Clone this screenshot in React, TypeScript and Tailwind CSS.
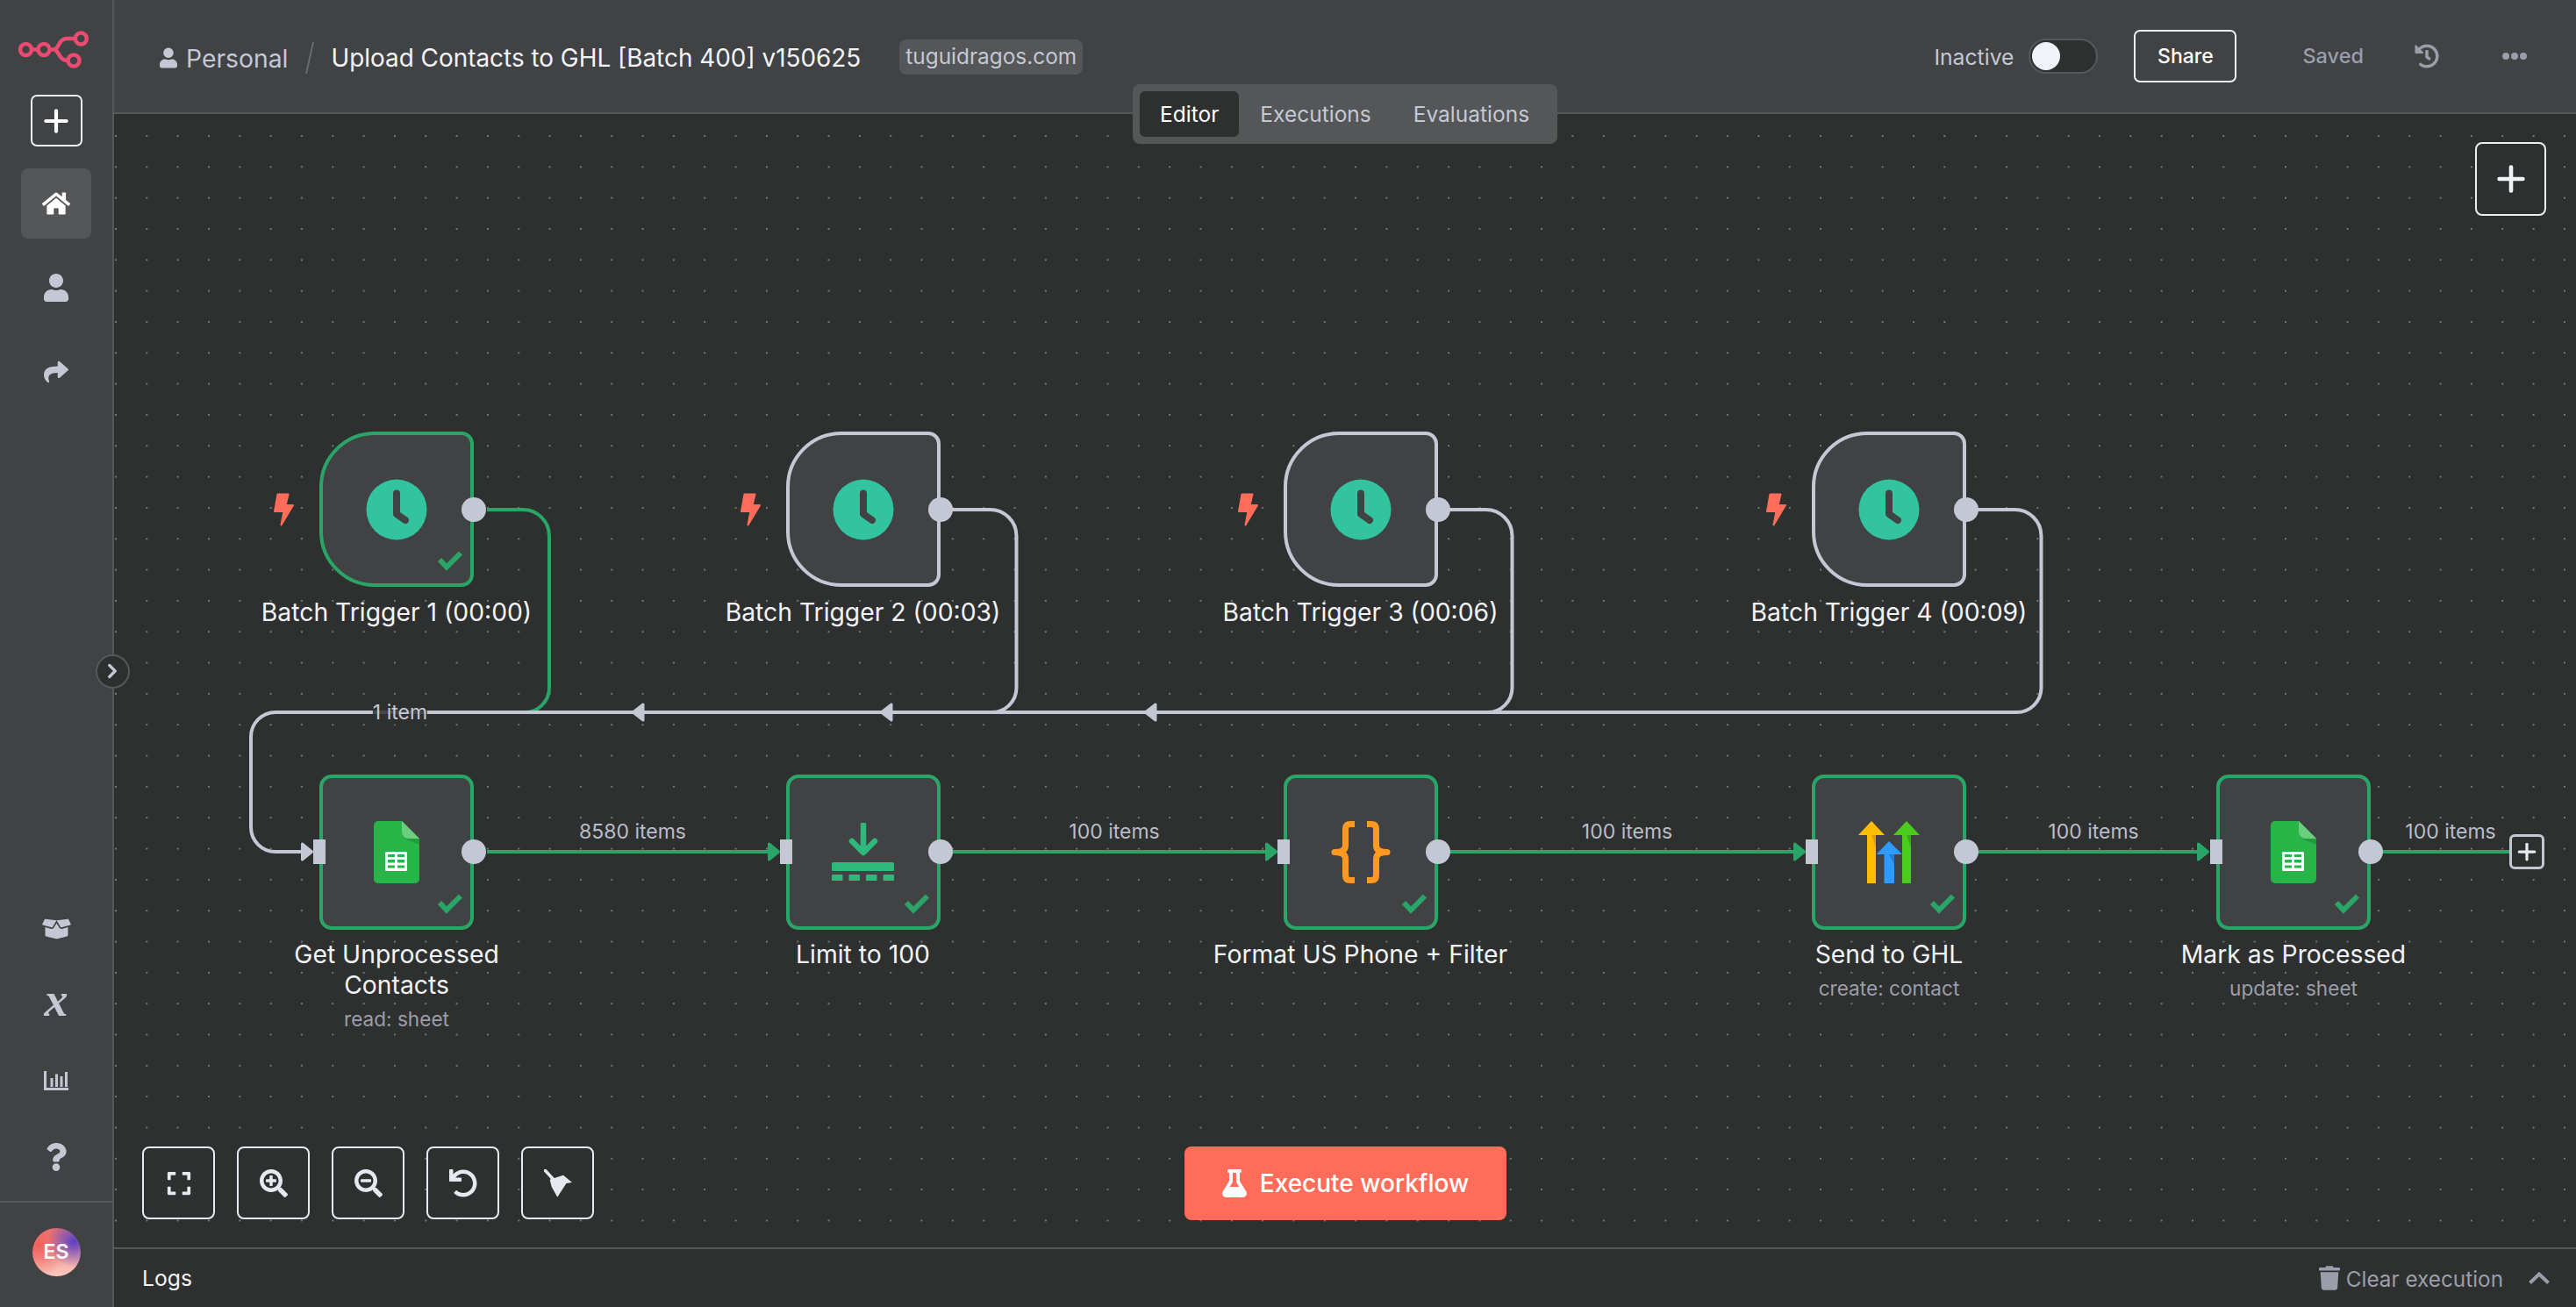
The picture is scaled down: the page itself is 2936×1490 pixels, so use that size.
import { Plus, ChevronRight } from 'lucide-react';
import {
  FaBoxOpen,
  FaExpand,
  FaFlask,
  FaHistory,
  FaHome,
  FaQuestion,
  FaSearchMinus,
  FaSearchPlus,
  FaShare,
  FaTrash,
  FaUndo,
  FaUser
} from 'react-icons/fa';

const GREEN = '#2aa568';
const GRAY = '#c4c8d4';

function Logo() {
  return (
    <svg viewBox="0 0 130 108" className="w-[130px] h-[108px]" fill="none" stroke="#ea4b71" strokeWidth="4.5">
      <circle cx="30.5" cy="56.5" r="6.5" />
      <circle cx="51" cy="56.5" r="6.5" />
      <circle cx="93.3" cy="44" r="6.5" />
      <circle cx="85" cy="69" r="6.5" />
      <path d="M37 56.5 H44.5 M57.5 56.5 H62 C69 56.5 67 44 77 44 H86.5 M62 56.5 C69 56.5 67 69 78.5 69" />
    </svg>
  );
}

function ChartIcon() {
  return (
    <svg viewBox="0 0 28 22" className="w-[28px] h-[22px]" fill={GRAY}>
      <path d="M1.5 0 V20.5 H28" fill="none" stroke={GRAY} strokeWidth="3" />
      <rect x="7.5" y="8" width="3" height="10" />
      <rect x="13" y="3.5" width="3" height="14.5" />
      <rect x="18.5" y="6" width="3" height="12" />
      <rect x="24" y="1" width="3" height="17" />
    </svg>
  );
}

function BroomIcon() {
  return (
    <svg viewBox="0 0 32 32" className="w-[32px] h-[32px]" fill="#e6e9f0">
      <path d="M1 1 L13 14" fill="none" stroke="#e6e9f0" strokeWidth="3.5" strokeLinecap="round" />
      <path d="M6.6 11.7 L22 6.7 L32 15 L25.5 16 L15.3 31.7 L8.7 20 Z" />
    </svg>
  );
}

function Sidebar() {
  return (
    <div className="w-[130px] shrink-0 bg-[#414244] border-r-2 border-[#56575a] flex flex-col items-center">
      <Logo />
      <button className="w-[59px] h-[59px] shrink-0 rounded-[7px] border-2 border-[#eceef4] flex items-center justify-center text-white">
        <Plus className="w-[40px] h-[40px] shrink-0" strokeWidth={2.5} />
      </button>
      <div className="mt-[25px] flex flex-col gap-[16px]">
        <div className="w-[80px] h-[80px] rounded-[8px] bg-[#555658] flex items-center justify-center text-white">
          <FaHome className="w-[32px] h-[32px]" />
        </div>
        <div className="w-[80px] h-[80px] flex items-center justify-center text-[#c4c8d4]">
          <FaUser className="w-[28px] h-[32px]" />
        </div>
        <div className="w-[80px] h-[80px] flex items-center justify-center text-[#c4c8d4]">
          <FaShare className="w-[32px] h-[28px]" />
        </div>
      </div>

      <div className="mt-auto w-full flex flex-col">
        <div className="h-[86.6px] flex items-center justify-center text-[#c4c8d4]">
          <FaBoxOpen className="w-[33px] h-[26px]" />
        </div>
        <div className="h-[86.6px] flex items-center justify-center">
          <span className="-mt-[11px] text-[54px] leading-none font-bold italic text-[#c4c8d4] [font-family:'Liberation_Serif',serif]">x</span>
        </div>
        <div className="h-[86.6px] flex items-center justify-center">
          <ChartIcon />
        </div>
        <div className="h-[86.6px] flex items-center justify-center text-[#c4c8d4]">
          <FaQuestion className="w-[24px] h-[32px]" />
        </div>
        <div className="mt-[7px] h-[121px] border-t-2 border-[#56575a] flex justify-center pt-[29px]">
          <div className="w-[55px] h-[55px] rounded-full flex items-center justify-center text-white text-[23px] font-semibold bg-[radial-gradient(circle_at_85%_28%,#5a3fc4_0%,transparent_48%),radial-gradient(circle_at_12%_35%,#f0605c_0%,transparent_60%),linear-gradient(180deg,#e87a7a,#fcc8bc)]">
            ES
          </div>
        </div>
      </div>
    </div>
  );
}

function Header() {
  return (
    <div className="h-[130px] shrink-0 bg-[#414244] border-b-2 border-[#56575a] flex items-center pl-[52px] pr-[56px]">
      <FaUser className="w-[20px] h-[24px] text-[#c4c8d4] mt-[4px]" />
      <span className="ml-[10px] mt-[6px] text-[28.3px] text-[#c4c8d4]">Personal</span>
      <svg viewBox="0 0 10 36" className="ml-[20px] w-[10px] h-[36px] mt-[4px]">
        <path d="M9 0 L1 36" stroke="#6a6b6e" strokeWidth="2" />
      </svg>
      <span className="ml-[19px] mt-[6px] text-[27.9px] text-[#f2f3f7]">Upload Contacts to GHL [Batch 400] v150625</span>
      <span className="ml-[44px] mt-[1px] h-[40px] px-[7px] rounded-[8px] bg-[#555658] text-[24.4px] text-[#c4c8d4] flex items-center">
        tuguidragos.com
      </span>

      <div className="ml-auto flex items-center">
        <span className="mt-[3px] text-[24.7px] text-[#c4c8d4]">Inactive</span>
        <div className="ml-[17px] w-[79px] h-[40px] rounded-full bg-[#2e302f] border-2 border-[#56575a] flex items-center pl-[2px]">
          <div className="w-[32px] h-[32px] rounded-full bg-[#f2f3f8]" />
        </div>
        <button className="ml-[41px] w-[117px] h-[60px] rounded-[7px] border-2 border-[#eceef4] text-[23px] font-medium text-white">
          Share
        </button>
        <span className="ml-[75px] text-[23.5px] font-medium text-[#9a9eab]">Saved</span>
        <FaHistory className="ml-[58px] w-[28px] h-[28px] text-[#9a9eab]" />
        <div className="ml-[72px] flex gap-[2px]">
          <div className="w-[8px] h-[8px] rounded-full bg-[#9a9eab]" />
          <div className="w-[8px] h-[8px] rounded-full bg-[#9a9eab]" />
          <div className="w-[8px] h-[8px] rounded-full bg-[#9a9eab]" />
        </div>
      </div>
    </div>
  );
}

function Tabs() {
  return (
    <div className="absolute left-[1161px] -top-[34px] w-[484px] h-[68px] rounded-[8px] bg-[#555658] flex items-center px-[8px] text-[24.5px] text-[#c4c8d4]">
      <div className="h-[52px] px-[23px] rounded-[6px] bg-[#2e302f] text-white flex items-center">Editor</div>
      <div className="px-[24px]">Executions</div>
      <div className="px-[24px]">Evaluations</div>
    </div>
  );
}

function ClockIcon() {
  return (
    <svg viewBox="0 0 70 70" className="w-[70px] h-[70px]">
      <circle cx="35" cy="35" r="34.5" fill="#31c49f" />
      <path d="M35 16.5 V40 L45 47" fill="none" stroke="#414244" strokeWidth="8" strokeLinejoin="round" strokeLinecap="round" />
    </svg>
  );
}

function SheetsIcon() {
  return (
    <svg viewBox="0 0 52 71" className="w-[52px] h-[71px]">
      <path d="M5 0 H32 L52 20 V66 a5 5 0 0 1 -5 5 H5 a5 5 0 0 1 -5 -5 V5 a5 5 0 0 1 5 -5 Z" fill="#28b446" />
      <path d="M35 20 L52 27 V20 Z" fill="#219b3c" />
      <path d="M32 0 L52 20 H40 a8 8 0 0 1 -8 -8 Z" fill="#6ace7c" />
      <rect x="13" y="35" width="25" height="22" rx="1.5" fill="#ffffff" />
      <g fill="#28b446">
        <rect x="16" y="38" width="8" height="3" />
        <rect x="27" y="38" width="8" height="3" />
        <rect x="16" y="44" width="8" height="3.5" />
        <rect x="27" y="44" width="8" height="3.5" />
        <rect x="16" y="50.5" width="8" height="3" />
        <rect x="27" y="50.5" width="8" height="3" />
      </g>
    </svg>
  );
}

function LimitIcon() {
  return (
    <svg viewBox="0 0 72 66" className="w-[72px] h-[66px]" fill="#2fb77c">
      <path d="M36 2 V33 M23 21 L36 34 L49 21" fill="none" stroke="#2fb77c" strokeWidth="6.5" strokeLinecap="round" strokeLinejoin="round" />
      <rect x="0" y="45" width="71" height="10" rx="1.5" />
      <rect x="0" y="59" width="12.5" height="7" rx="1" />
      <rect x="19.5" y="59" width="12.5" height="7" rx="1" />
      <rect x="39" y="59" width="12.5" height="7" rx="1" />
      <rect x="58.5" y="59" width="12.5" height="7" rx="1" />
    </svg>
  );
}

function CodeIcon() {
  return (
    <svg viewBox="0 0 68 71" className="w-[68px] h-[71px]" fill="none" stroke="#ff9922" strokeWidth="7" strokeLinejoin="round">
      <path d="M27 3.5 H22 Q16.5 3.5 16.5 9 V28 Q16.5 35.5 4 35.5 Q16.5 35.5 16.5 43 V62 Q16.5 67.5 22 67.5 H27" />
      <path d="M41 3.5 H46 Q51.5 3.5 51.5 9 V28 Q51.5 35.5 64 35.5 Q51.5 35.5 51.5 43 V62 Q51.5 67.5 46 67.5 H41" />
    </svg>
  );
}

function GhlIcon() {
  return (
    <svg viewBox="0 0 70 71" className="w-[70px] h-[71px]">
      <path d="M10 16 H20 V71 H10 Z" fill="#ffbc00" />
      <path d="M0 16 L15 0 L30 16 Z" fill="#ffbc00" />
      <path d="M15 16 H20 V30 Z" fill="#d99f06" />
      <path d="M50 16 H60 V71 H50 Z" fill="#4bcb1e" />
      <path d="M40 16 L55 0 L70 16 Z" fill="#4bcb1e" />
      <path d="M55 16 H60 V30 Z" fill="#3ca818" />
      <path d="M29.5 38 H41 V71 H29.5 Z" fill="#2d9bff" />
      <path d="M20.5 38 L35 23 L50 38 Z" fill="#2d9bff" />
      <path d="M35 38 H41 V50 Z" fill="#237fd4" />
    </svg>
  );
}

interface FlowNode {
  id: string;
  name: string;
  sub?: string;
  pos: string;
  icon: React.ReactNode;
}

const triggers: (FlowNode & { active: boolean })[] = [
  { id: 't1', name: 'Batch Trigger 1 (00:00)', pos: 'left-[364px] top-[492px]', icon: <ClockIcon />, active: true },
  { id: 't2', name: 'Batch Trigger 2 (00:03)', pos: 'left-[895.5px] top-[492px]', icon: <ClockIcon />, active: false },
  { id: 't3', name: 'Batch Trigger 3 (00:06)', pos: 'left-[1462.5px] top-[492px]', icon: <ClockIcon />, active: false },
  { id: 't4', name: 'Batch Trigger 4 (00:09)', pos: 'left-[2065px] top-[492px]', icon: <ClockIcon />, active: false }
];

const steps: FlowNode[] = [
  { id: 's1', name: 'Get Unprocessed\nContacts', sub: 'read: sheet', pos: 'left-[364px] top-[882.5px]', icon: <SheetsIcon /> },
  { id: 's2', name: 'Limit to 100', pos: 'left-[895.5px] top-[882.5px]', icon: <LimitIcon /> },
  { id: 's3', name: 'Format US Phone + Filter', pos: 'left-[1462.5px] top-[882.5px]', icon: <CodeIcon /> },
  { id: 's4', name: 'Send to GHL', sub: 'create: contact', pos: 'left-[2065px] top-[882.5px]', icon: <GhlIcon /> },
  { id: 's5', name: 'Mark as Processed', sub: 'update: sheet', pos: 'left-[2526px] top-[882.5px]', icon: <SheetsIcon /> }
];

const edgeLabels = [
  { text: '8580 items', pos: 'left-[721px]' },
  { text: '100 items', pos: 'left-[1270px]' },
  { text: '100 items', pos: 'left-[1854.5px]' },
  { text: '100 items', pos: 'left-[2386px]' },
  { text: '100 items', pos: 'left-[2793px]' }
];

function NodeLabel({ name, sub }: { name: string; sub?: string }) {
  return (
    <div className="absolute left-1/2 -translate-x-1/2 top-full mt-[11.5px] w-[400px] text-center">
      <div className="text-[28.3px] leading-[35px] text-[#f2f3f7] whitespace-pre-line">{name}</div>
      {sub && <div className="mt-[6px] text-[22.6px] leading-[30px] text-[#9a9eab]">{sub}</div>}
    </div>
  );
}

function NodeCheck() {
  return (
    <svg viewBox="0 0 32 26" className="absolute left-[130px] top-[131px] w-[32px] h-[26px]">
      <path d="M3 11 L11 19.5 L27 3.5" fill="none" stroke={GREEN} strokeWidth="6" />
    </svg>
  );
}

function TriggerNode({ node }: { node: FlowNode & { active: boolean } }) {
  return (
    <div className={`absolute ${node.pos}`}>
      <div className="absolute -left-[52px] top-[70px]">
        <svg viewBox="0 0 23 38" className="w-[23px] h-[38px]" fill="#ff6d5a" stroke="#ff6d5a" strokeWidth="2" strokeLinejoin="round">
          <path d="M4.5 1.5 H16.5 L13.5 14 H22 L8.5 36.5 L11.5 21 H1 Z" />
        </svg>
      </div>
      <div
        className={`relative w-[176px] h-[177px] rounded-l-[63px] rounded-r-[14px] border-[4px] bg-[#414244] flex items-center justify-center ${
          node.active ? 'border-[#2aa568]' : 'border-[#c4c8d4]'
        }`}
      >
        {node.icon}
        {node.active && <NodeCheck />}
        <div className="absolute -right-[18px] top-1/2 -translate-y-1/2 w-[28px] h-[28px] rounded-full bg-[#c4c8d4]" />
      </div>
      <NodeLabel name={node.name} />
    </div>
  );
}

function StepNode({ node }: { node: FlowNode }) {
  return (
    <div className={`absolute ${node.pos}`}>
      <div className="relative w-[176px] h-[177px] rounded-[14px] border-[4px] border-[#2aa568] bg-[#414244] flex items-center justify-center">
        {node.icon}
        <NodeCheck />
        <div className="absolute -left-[11px] top-1/2 -translate-y-1/2 w-[14px] h-[28px] bg-[#c4c8d4]" />
        <div className="absolute -right-[18px] top-1/2 -translate-y-1/2 w-[28px] h-[28px] rounded-full bg-[#c4c8d4]" />
      </div>
      <NodeLabel name={node.name} sub={node.sub} />
    </div>
  );
}

function Edges() {
  const rightArrow = (tip: number, color: string) => (
    <polygon
      key={tip}
      points={`${tip - 12.5},${962} ${tip - 1.5},${971} ${tip - 12.5},${980}`}
      fill={color}
      stroke={color}
      strokeWidth="3"
      strokeLinejoin="round"
    />
  );
  const leftArrow = (tip: number) => (
    <polygon
      key={tip}
      points={`${tip + 13},${803} ${tip + 1.5},${812} ${tip + 13},${821}`}
      fill={GRAY}
      stroke={GRAY}
      strokeWidth="3"
      strokeLinejoin="round"
    />
  );

  return (
    <svg viewBox="0 0 2936 1490" className="absolute inset-0 w-[2936px] h-[1490px]" fill="none" strokeWidth="4">
      <path d="M555 581 H596 A30 30 0 0 1 626 611 V784 A28 28 0 0 1 598 812 H440" stroke={GREEN} />
      <path d="M1071 581 H1128.5 A30 30 0 0 1 1158.5 611 V784 A28 28 0 0 1 1130.5 812" stroke={GRAY} />
      <path d="M1638 581 H1693.5 A30 30 0 0 1 1723.5 611 V784 A28 28 0 0 1 1695.5 812" stroke={GRAY} />
      <path
        d="M2241 581 H2296.5 A30 30 0 0 1 2326.5 611 V784 A28 28 0 0 1 2298.5 812 H314 A28 28 0 0 0 286 840 V943 A28 28 0 0 0 314 971 H346"
        stroke={GRAY}
      />
      {[720, 1003, 1304].map(leftArrow)}
      {rightArrow(357, GRAY)}

      <path d="M555 971 H878 M1072 971 H1444 M1639 971 H2046 M2242 971 H2507 M2702 971 H2862" stroke={GREEN} />
      {[889, 1456, 2058, 2518].map(tip => rightArrow(tip, GREEN))}
    </svg>
  );
}

function Flow() {
  return (
    <div className="absolute -left-[130px] -top-[130px] w-[2936px] h-[1490px]">
      <Edges />
      {triggers.map(node => (
        <TriggerNode key={node.id} node={node} />
      ))}
      {steps.map(node => (
        <StepNode key={node.id} node={node} />
      ))}

      <div className="absolute left-[456px] top-[798px] -translate-x-1/2 h-[28px] bg-[#2e302f]/85 text-[23px] leading-[28px] text-[#c4c8d4]">
        1 item
      </div>
      {edgeLabels.map(label => (
        <div key={label.pos} className={`absolute ${label.pos} top-[934px] -translate-x-1/2 text-[23px] leading-[28px] text-[#b9bdc9]`}>
          {label.text}
        </div>
      ))}
      <div className="absolute left-[2860px] top-[951px] w-[40px] h-[40px] rounded-[6px] border-[3.5px] border-[#c4c8d4] bg-[#2e302f] flex items-center justify-center text-[#e6e9f0]">
        <Plus className="w-[30px] h-[30px] shrink-0" strokeWidth={2.6} />
      </div>
    </div>
  );
}

function CanvasControls() {
  const box =
    'w-[83px] h-[83px] rounded-[8px] border-2 border-[#e6e9f0] bg-[#2e302f] flex items-center justify-center text-[#e6e9f0]';
  return (
    <div className="absolute left-[32px] bottom-[32px] flex gap-[25px]">
      <button className={box}>
        <FaExpand className="w-[30px] h-[30px]" />
      </button>
      <button className={box}>
        <FaSearchPlus className="w-[32px] h-[32px]" />
      </button>
      <button className={box}>
        <FaSearchMinus className="w-[32px] h-[32px]" />
      </button>
      <button className={box}>
        <FaUndo className="w-[32px] h-[32px]" />
      </button>
      <button className={box}>
        <BroomIcon />
      </button>
    </div>
  );
}

export default function App() {
  return (
    <div className="h-screen w-full flex overflow-hidden bg-[#2e302f] [font-family:Inter,sans-serif]">
      <Sidebar />
      <div className="relative flex-1 min-w-0 flex flex-col">
        <Header />
        <div className="relative flex-1 bg-[#2e302f] bg-[radial-gradient(circle,#74767a_1px,transparent_1.5px)] [background-size:35.33px_35.33px] [background-position:-15.67px_7.33px]">
          <Flow />
          <Tabs />
          <button className="absolute right-[34px] top-[32px] w-[81px] h-[84px] rounded-[8px] border-2 border-[#eceef4] bg-[#2e302f] flex items-center justify-center text-[#f2f3f7]">
            <Plus className="w-[46px] h-[46px]" strokeWidth={2.4} />
          </button>
          <CanvasControls />
          <button className="absolute left-[1220px] bottom-[31px] w-[367px] h-[84px] rounded-[8px] bg-[#ff6d5a] flex items-center justify-center gap-[15px] text-white text-[28px] font-medium">
            <FaFlask className="w-[28px] h-[32px]" />
            Execute workflow
          </button>
        </div>
        <div className="h-[68px] shrink-0 bg-[#2e302f] border-t-2 border-[#56575a] flex items-center pl-[32px] pr-[29px]">
          <span className="mt-[2px] text-[24.7px] text-[#f2f3f7]">Logs</span>
          <div className="ml-auto flex items-center text-[#9a9eab]">
            <FaTrash className="w-[24px] h-[28px]" />
            <span className="ml-[7px] mt-[2px] text-[24.3px]">Clear execution</span>
            <svg viewBox="0 0 26 14" className="ml-[28px] w-[26px] h-[14px]" fill="none" stroke="currentColor" strokeWidth="4">
              <path d="M2.5 12.5 L13 2.5 L23.5 12.5" />
            </svg>
          </div>
        </div>
      </div>
      {/* Sidebar collapse toggle */}
      <div className="absolute left-[108.5px] top-[745.5px] w-[39px] h-[39px] rounded-full bg-[#2e302f] border-2 border-[#56575a] flex items-center justify-center text-[#c4c8d4]">
        <ChevronRight className="w-[26px] h-[26px]" strokeWidth={3} />
      </div>
    </div>
  );
}
